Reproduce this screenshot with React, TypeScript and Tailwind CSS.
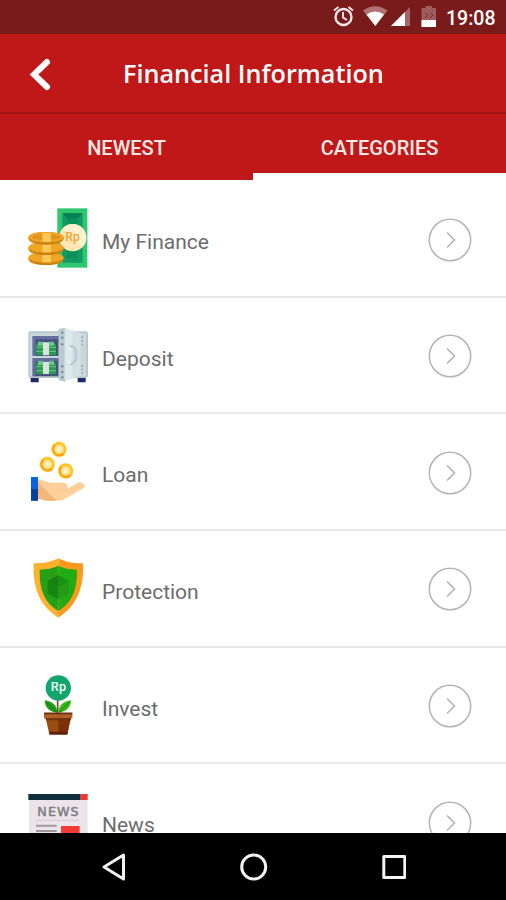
import type { ReactNode } from "react";

const FinanceIcon = () => (
  <svg viewBox="39 39 180 180" className="size-[60px]">
    <rect x="127" y="40" width="90" height="178" fill="#2fc670" />
    <path d="M142 55h61v148h-61z" fill="#119a63" />
    <path d="M142 55h61l-16 16h-30z" fill="#067f52" />
    <path d="M157 71h30v118h-30z" fill="#0c8f5a" />
    <circle cx="173" cy="128" r="41" fill="#fbe6b4" />
    <path d="M144 99a41 41 0 0 1 58 58z" fill="#fff0cf" />
    <text x="151" y="137" textLength="43" fontSize="36" className="font-['Roboto',sans-serif]" fontWeight="500" fill="#f2a53c">Rp</text>
    {[191, 161, 130].map((y, i) => (
      <g key={y}>
        <path d={`M40 ${y}c0-13 24-19 53-19s53 6 53 19c0 13-24 19-53 19s-53-6-53-19z`} fill="#cb7d0b" />
        <path d={`M40 ${y - 2}c0-12 24-17 53-17s53 5 53 17c0 9-24 14-53 14s-53-5-53-14z`} fill="#efa526" />
        <path d={`M45 ${y + 4}c8 7 27 9 48 9s40-2 48-9`} fill="none" stroke="#d68a13" strokeWidth="6" strokeDasharray="5 4" />
        {i === 2 && <ellipse cx="93" cy={y - 4} rx="43" ry="9" fill="#e0941b" />}
        <path d={`M82 ${y - 15}h26v26H82z`} fill="#fbc855" />
      </g>
    ))}
  </svg>
);

const SafeIcon = () => (
  <svg viewBox="39 38 180 180" className="size-[60px]">
    <path d="M47 196h24v14H47zM188 196h24v14h-24z" fill="#20296b" />
    <rect x="40" y="57" width="179" height="140" rx="7" fill="#b4c7cc" />
    <rect x="44" y="62" width="170" height="130" rx="5" fill="#c9d7db" />
    <path d="M53 72h78v59H53zM53 138h78v54H53z" fill="#46517f" />
    <path d="M53 72h78v9H62v50h-9zM53 138h78v8H62v46h-9z" fill="#626e9b" />
    <path d="M64 94h20v35H64zM102 94h21v35h-21zM64 151h20v35H64zM102 151h21v35h-21z" fill="#2b9952" />
    <path d="M69 88h15v12H69zM102 88h15v12h-15zM69 146h15v12H69zM102 146h15v12h-15z" fill="#69c789" />
    <path d="M64 105h20M64 117h20M102 105h21M102 117h21M64 163h20M64 175h20M102 163h21M102 175h21" stroke="#64cb85" strokeWidth="3" />
    <path d="M84 90h18v39H84zM84 148h18v37H84z" fill="#dbe4df" />
    <path d="M131 49l22-3v163l-22-5z" fill="#b9cad1" />
    <path d="M149 47l47 15v128l-47 17z" fill="#dce8eb" />
    <path d="M172 54l24 8v128l-24 9z" fill="#d2e0e4" />
    <path d="M164 105c11-8 19 2 19 22s-8 31-19 27" fill="none" stroke="#b9cad2" strokeWidth="8" />
    <path d="M164 104v10M164 145v10" stroke="#eef5f5" strokeWidth="5" />
    {[61, 76, 96, 162, 179, 195].map((y) => <circle key={y} cx="142" cy={y} r="3.5" fill="#75899e" />)}
    <path d="M201 72v27M201 158v26" stroke="#9aafbb" strokeWidth="6" strokeDasharray="5 6" />
  </svg>
);

const LoanIcon = () => (
  <svg viewBox="39 34 180 180" className="size-[60px]">
    {[[132, 59], [97, 104], [152, 124]].map(([x, y]) => (
      <g key={x}>
        <circle cx={x} cy={y} r="23" fill="#ffc326" />
        <path d={`M${x - 16} ${y - 16}a23 23 0 0 0 32 32z`} fill="#ff9f0a" />
        <circle cx={x} cy={y} r="14.5" fill="#ffe38f" />
        <path d={`M${x - 6} ${y - 4}l6-5 7 5v8l-7 5-6-4z`} fill="#fff1c7" />
      </g>
    ))}
    <path d="M69 150c14-2 24 8 39 9h38c11 0 16 13 10 19l34-20c10-3 24 6 17 16l-58 34c-6 4-9 5-16 5H99c-11 0-17-4-30-6z" fill="#ffcf9b" />
    <path d="M69 157l55 56H99c-11 0-17-4-30-6z" fill="#f5b779" />
    <path d="M125 181h22c6 0 9-2 10-5" fill="none" stroke="#f8c48e" strokeWidth="3" />
    <rect x="48" y="142" width="21" height="71" fill="#0763df" />
    <rect x="48" y="178" width="21" height="35" fill="#07419e" />
  </svg>
);

const ShieldIcon = () => (
  <svg viewBox="39 39 180 180" className="size-[60px]">
    <path d="M130 40c22 11 44 15 74 15 3 71-17 128-74 163z" fill="#ff991c" />
    <path d="M130 40c-22 11-44 15-74 15-3 71 17 128 74 163z" fill="#ffb02c" />
    <path d="M130 62c18 8 33 11 56 12 1 56-12 97-56 124z" fill="#22ab13" />
    <path d="M130 62c-18 8-33 11-56 12-1 56 12 97 56 124z" fill="#26a017" />
    <path d="M98 107l32-16v70l-32-15z" fill="#168010" />
    <path d="M130 91l30 16v39l-30 15z" fill="#149314" />
    <path d="M98 107l32 20 30-20v39l-30 15-32-15z" fill="#12900e" opacity=".45" />
    <path d="M130 127l30-20v39l-30 15z" fill="#3aa323" opacity=".55" />
  </svg>
);

const InvestIcon = () => (
  <svg viewBox="39 38 180 180" className="size-[60px]">
    <path d="M128 107v46" stroke="#70531e" strokeWidth="5" />
    <circle cx="130" cy="77" r="38" fill="#11a66c" />
    <text x="107" y="87" textLength="46" fontSize="38" fontWeight="500" className="font-['Roboto',sans-serif]" fill="#f5fff8">Rp</text>
    <path d="M127 151c-19 0-38-13-38-37 22 3 37 14 38 37z" fill="#229d19" />
    <path d="M130 151c18 0 38-13 38-37-22 3-37 14-38 37z" fill="#38b814" />
    <path d="M95 120l30 30M162 120l-30 30" stroke="#128016" strokeWidth="3" />
    <path d="M91 163h77l-11 53h-54z" fill="#9b4d12" />
    <path d="M130 163h38l-11 53h-27z" fill="#7c3109" />
    <path d="M103 208h54v9h-54z" fill="#60220d" />
    <path d="M87 151h85v17H87z" fill="#b05f26" />
    <path d="M87 151h85v5H87z" fill="#653219" />
    <path d="M91 168h77v6H93z" fill="#72320f" />
  </svg>
);

const NewsIcon = () => (
  <svg viewBox="84 109 180 180" className="size-[60px]">
    <path d="M87 118h176v171H87z" fill="#ebe4e9" />
    <path d="M85 118h157v18H85z" fill="#102d3b" />
    <path d="M242 118h21v18h-21z" fill="#f23730" />
    <text x="112" y="185" textLength="124" fontSize="38" stroke="#807d82" strokeWidth="1.5" className="font-['DejaVu_Sans',sans-serif]" fill="#807d82">NEWS</text>
    <path d="M108 197h131" stroke="#d1c9cf" strokeWidth="3" />
    <path d="M108 213h62M108 229h62M108 245h62" stroke="#9c989c" strokeWidth="6" />
    <path d="M183 214h56v45h-56z" fill="#f23c35" />
  </svg>
);

const categories: { label: string; icon: ReactNode }[] = [
  { label: "My Finance", icon: <FinanceIcon /> },
  { label: "Deposit", icon: <SafeIcon /> },
  { label: "Loan", icon: <LoanIcon /> },
  { label: "Protection", icon: <ShieldIcon /> },
  { label: "Invest", icon: <InvestIcon /> },
  { label: "News", icon: <NewsIcon /> },
];

function StatusBar() {
  return (
    <div className="flex h-[34px] shrink-0 items-center justify-end bg-[#791b1a] pr-[11px] text-white">
      <svg viewBox="332 6 108 24" className="h-6 w-[108px]" fill="none">
        <circle cx="343.500" cy="18" r="8" stroke="#fbe8e6" strokeWidth="2.3" />
        <path d="M343 13v5.500l4 2.500M334 11.500l4.500-3.500M353 11.500L348.500 8" stroke="#fbe8e6" strokeWidth="2" />
        <path d="M363 11.500Q375 3 387.500 11.500L375.300 27z" fill="#ad7371" />
        <path d="M366.500 15.500Q375 9.500 384 15.500L375.300 27z" fill="#fff" />
        <path d="M410 8v19h-19z" fill="#a66463" />
        <path d="M405 13v14h-14z" fill="#fff" />
        <path d="M425.500 7h6.500v2h4v19h-14.500V9h4z" fill="#9e5d5c" />
        <path d="M421.500 21H436v7h-14.500z" fill="#fff" />
        <path d="M425 14l3 2-3 3M430 14l3 2-3 3" stroke="#7c2929" />
      </svg>
      <span className="ml-[6px] mt-1 w-[49px] whitespace-nowrap text-[19.5px] font-medium leading-[34px]">19:08</span>
    </div>
  );
}

export default function App() {
  return (
    <div className="flex h-[900px] w-[506px] flex-col overflow-hidden bg-white font-['Roboto',sans-serif]">
      <StatusBar />
      <header className="flex h-[80px] shrink-0 items-center border-b-2 border-[#a01414] bg-[#c01818] text-white">
        <svg viewBox="0 0 24 36" className="ml-7 mt-px h-9 w-6" fill="none" stroke="#fff" strokeLinecap="round">
          <path d="M19 6L6 18.500 19 31" strokeWidth="6" />
        </svg>
        <h1 className="ml-[71px] mt-0.5 whitespace-nowrap font-['Open_Sans',sans-serif] text-[25.2px] font-semibold">Financial Information</h1>
      </header>
      <nav className="grid h-[66px] shrink-0 grid-cols-2 bg-[#c01818] text-[20px] font-medium leading-5 text-[#ffeae7]">
        <button className="flex items-start justify-center pt-[24px]">NEWEST</button>
        <button className="flex items-start justify-center border-b-[7px] border-white pt-[24px]">CATEGORIES</button>
      </nav>
      <main className="min-h-0 flex-1 overflow-hidden pt-px">
        {categories.map(({ label, icon }) => (
          <div key={label} className="flex h-[116.67px] items-start border-b-2 border-[#e8e8e8] pl-7 pr-[34px]">
            <span className="mt-[27px] shrink-0">{icon}</span>
            <span className="ml-[14px] mt-[45px] flex-1 text-[21px] leading-8 text-[#6c6c6c]">{label}</span>
            <svg viewBox="0 0 44 44" className="mt-[36.5px] size-11 shrink-0" fill="none" stroke="#b4b4b4">
              <circle cx="22" cy="22" r="20.700" strokeWidth="1.500" />
              <path d="M19 14.500l7.500 7.500-7.500 7.500" strokeWidth="1.600" />
            </svg>
          </div>
        ))}
      </main>
      <footer className="flex h-[67px] shrink-0 items-center justify-center bg-black">
        <svg viewBox="0 0 306 32" className="h-8 w-[306px]" fill="none" stroke="#f4f4f4" strokeWidth="3" strokeLinejoin="round">
          <path d="M23.500 4v24L4 16z" />
          <circle cx="153.700" cy="16" r="12" />
          <rect x="283.800" y="5.500" width="21" height="21" />
        </svg>
      </footer>
    </div>
  );
}
